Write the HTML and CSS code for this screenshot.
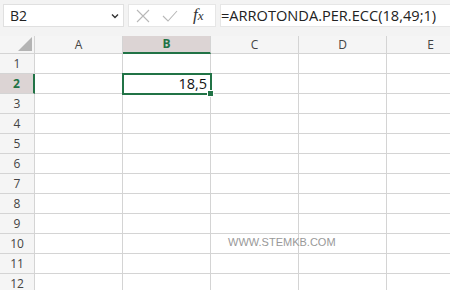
FILE: index.html
```html
<!DOCTYPE html>
<html>
<head>
<meta charset="utf-8">
<link rel="stylesheet" href="styles.css">
</head>
<body>
<div class="app">
  <div class="toolbar">
    <div class="namebox">
      <span class="name">B2</span>
      <svg class="chev" width="8" height="6" viewBox="0 0 8 6"><path d="M1 1.5 L4 4.5 L7 1.5" fill="none" stroke="#333" stroke-width="1.4"/></svg>
    </div>
    <div class="fxbox">
      <svg class="ico" width="14" height="14" viewBox="0 0 14 14"><path d="M1 1 L13 13 M13 1 L1 13" stroke="#b8b8b8" stroke-width="1.1" fill="none"/></svg>
      <svg class="ico" width="16" height="12" viewBox="0 0 16 12"><path d="M1 6 L6 11 L15 1" stroke="#b8b8b8" stroke-width="1.1" fill="none"/></svg>
      <span class="fx"><i>f</i><span class="x">x</span></span>
    </div>
    <div class="formula">=ARROTONDA.PER.ECC(18,49;1)</div>
  </div>
  <div class="sheet">
    <div class="hrow">
      <div class="corner"><span class="tri"></span></div>
      <div class="ch">A</div>
      <div class="ch sel">B</div>
      <div class="ch">C</div>
      <div class="ch">D</div>
      <div class="ch">E</div>
    </div>
    <div class="row"><div class="rh">1</div><div class="c"></div><div class="c"></div><div class="c"></div><div class="c"></div><div class="c"></div></div>
    <div class="row"><div class="rh sel">2</div><div class="c"></div><div class="c num">18,5</div><div class="c"></div><div class="c"></div><div class="c"></div></div>
    <div class="row"><div class="rh">3</div><div class="c"></div><div class="c"></div><div class="c"></div><div class="c"></div><div class="c"></div></div>
    <div class="row"><div class="rh">4</div><div class="c"></div><div class="c"></div><div class="c"></div><div class="c"></div><div class="c"></div></div>
    <div class="row"><div class="rh">5</div><div class="c"></div><div class="c"></div><div class="c"></div><div class="c"></div><div class="c"></div></div>
    <div class="row"><div class="rh">6</div><div class="c"></div><div class="c"></div><div class="c"></div><div class="c"></div><div class="c"></div></div>
    <div class="row"><div class="rh">7</div><div class="c"></div><div class="c"></div><div class="c"></div><div class="c"></div><div class="c"></div></div>
    <div class="row"><div class="rh">8</div><div class="c"></div><div class="c"></div><div class="c"></div><div class="c"></div><div class="c"></div></div>
    <div class="row"><div class="rh">9</div><div class="c"></div><div class="c"></div><div class="c"></div><div class="c"></div><div class="c"></div></div>
    <div class="row"><div class="rh">10</div><div class="c"></div><div class="c"></div><div class="c"></div><div class="c"></div><div class="c"></div></div>
    <div class="row"><div class="rh">11</div><div class="c"></div><div class="c"></div><div class="c"></div><div class="c"></div><div class="c"></div></div>
    <div class="row"><div class="rh">12</div><div class="c"></div><div class="c"></div><div class="c"></div><div class="c"></div><div class="c"></div></div>
    <div class="selbox"><span class="handle"></span></div>
    <div class="wm">WWW.STEMKB.COM</div>
  </div>
</div>
</body>
</html>
```

FILE: styles.css
```css
* { box-sizing: border-box; }
html, body { margin: 0; padding: 0; }
body { width: 450px; height: 290px; overflow: hidden; background: #fff; font-family: "Open Sans", "Noto Sans", sans-serif; }
.app { width: 450px; height: 290px; overflow: hidden; }
.toolbar { height: 36px; background: #f3f3f3; display: flex; align-items: flex-start; padding-top: 4px; padding-left: 3px; gap: 4px; }
.namebox { width: 121px; height: 23px; background: #fff; border: 1px solid #e0e0e0; display: flex; align-items: center; justify-content: space-between; padding: 0 4px 0 6px; }
.name { font-size: 14px; color: #222; }
.chev { margin-top: 1px; }
.fxbox { width: 88px; height: 23px; background: #fff; border: 1px solid #e6e6e6; display: flex; align-items: center; padding-left: 7px; gap: 12px; }
.fx { font-family: "Liberation Serif", "DejaVu Serif", serif; font-size: 17px; color: #333; margin-left: 3px; line-height: 20px; }
.fx .x { font-style: italic; font-size: 13px; }
.formula { flex: 1; height: 23px; background: #fff; border: 1px solid #e6e6e6; border-right: none; font-size: 14.6px; color: #222; padding-left: 0; line-height: 21px; white-space: nowrap; }
.sheet { position: relative; }
.hrow { display: flex; height: 18px; background: #f5f5f5; }
.corner { width: 35px; flex: none; border-right: 1px solid #d4d4d4; border-bottom: 1px solid #d4d4d4; position: relative; }
.tri { position: absolute; right: 2px; bottom: 2px; width: 0; height: 0; border-left: 14px solid transparent; border-bottom: 14px solid #b4b4b4; }
.ch { width: 88px; flex: none; border-right: 1px solid #d4d4d4; border-bottom: 1px solid #d4d4d4; font-size: 12px; color: #444; text-align: center; line-height: 17px; }
.ch.sel { background: #dcd4d4; color: #217346; font-weight: bold; border-bottom: 2px solid #217346; line-height: 16px; }
.row { display: flex; height: 20px; }
.rh { width: 35px; flex: none; background: #f5f5f5; border-right: 1px solid #d4d4d4; border-bottom: 1px solid #d4d4d4; font-size: 12px; color: #444; text-align: center; line-height: 19px; }
.rh.sel { background: #dcd4d4; color: #217346; font-weight: bold; border-right: 2px solid #217346; }
.c { width: 88px; flex: none; border-right: 1px solid #d4d4d4; border-bottom: 1px solid #d4d4d4; }
.num { font-size: 14.5px; color: #111; text-align: right; padding-right: 3px; line-height: 20px; }
.selbox { position: absolute; left: 122px; top: 37px; width: 90px; height: 22px; border: 2px solid #217346; }
.handle { position: absolute; right: -4px; bottom: -4px; width: 5px; height: 5px; background: #217346; border: 1px solid #fff; box-sizing: content-box; }
.wm { position: absolute; left: 228px; top: 200px; font-size: 11px; color: #999; font-family: "Liberation Sans", "Noto Sans", sans-serif; }
```
